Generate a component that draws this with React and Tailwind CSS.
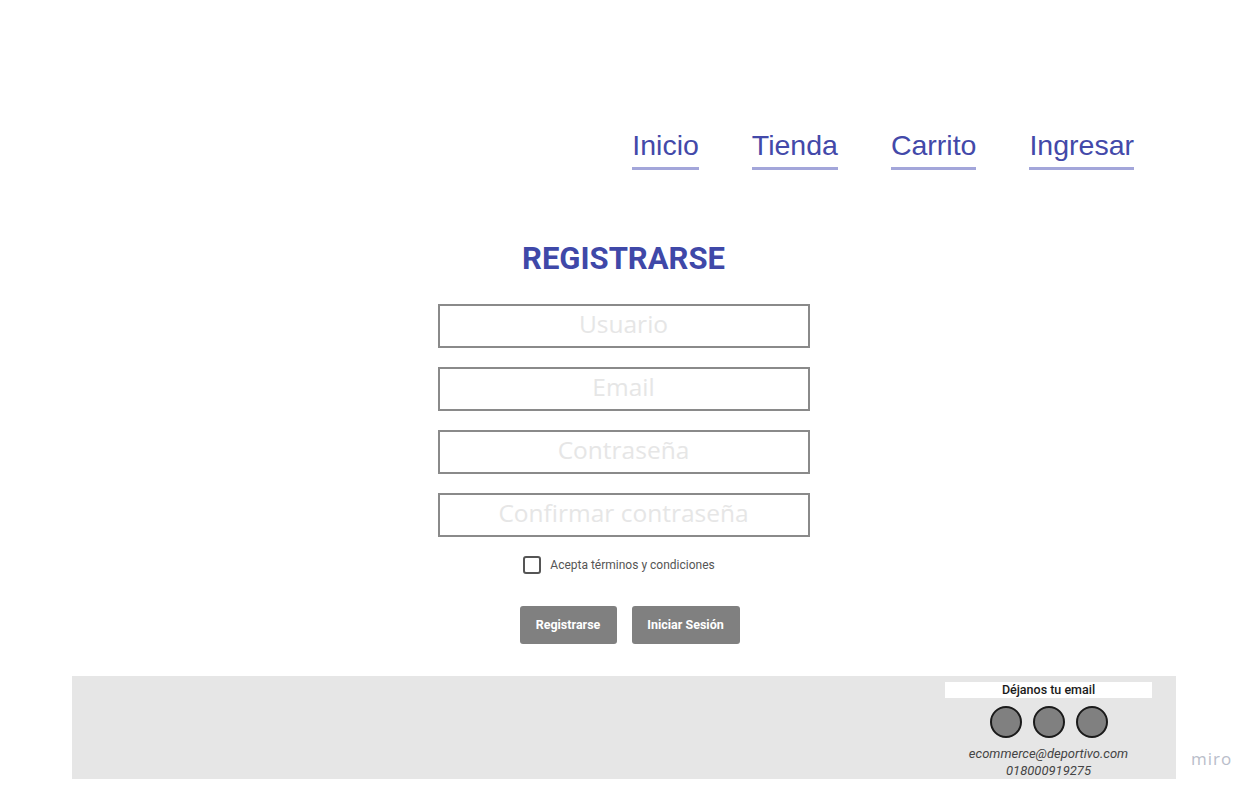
import React from 'react';

const navItems = ['Inicio', 'Tienda', 'Carrito', 'Ingresar'];
const fields = ['Usuario', 'Email', 'Contraseña', 'Confirmar contraseña'];

const NavLink = ({ label }) => (
  <a
    href="#"
    className="block pb-[6px] border-b-[3px] border-[#a3a6da] text-[28.5px] leading-[32px] text-[#4349a9] font-['Liberation_Sans',Arial,sans-serif]"
  >
    {label}
  </a>
);

const App = () => {
  return (
    <div className="relative w-full min-h-[793px] bg-white font-['Roboto',sans-serif]">
      {/* Header nav */}
      <nav className="flex justify-end gap-[53px] pt-[129px] pr-[126px]">
        {navItems.map((item) => (
          <NavLink key={item} label={item} />
        ))}
      </nav>

      {/* Register form */}
      <main className="flex flex-col items-center pt-[71px] pr-[13px]">
        <h1 className="text-[31px] leading-[36px] font-bold text-[#3f48a8] font-['Roboto',sans-serif]">
          REGISTRARSE
        </h1>

        <div className="flex flex-col gap-[19px] mt-[27px] w-[372px]">
          {fields.map((field) => (
            <input
              key={field}
              type={field.includes('ontraseña') ? 'password' : 'text'}
              placeholder={field}
              className="h-[44px] w-full border-2 border-[#8a8a8a] bg-white text-center text-[24.5px] pb-[5px] font-['Open_Sans',sans-serif] placeholder:text-[#e6e6e6] outline-none"
            />
          ))}
        </div>

        <label className="flex items-center gap-[9px] mt-[19px] pr-[9px] cursor-pointer">
          <span className="w-[18px] h-[18px] border-2 border-[#555] rounded-[3px] bg-white" />
          <span className="text-[12px] leading-[18px] text-[#555] font-['Roboto',sans-serif]">
            Acepta términos y condiciones
          </span>
        </label>

        <div className="flex gap-[15px] mt-[32px] pl-[12px]">
          <button className="w-[97px] h-[38px] rounded-[3px] bg-[#808080] text-white text-[12.5px] font-bold font-['Roboto',sans-serif]">
            Registrarse
          </button>
          <button className="w-[108px] h-[38px] rounded-[3px] bg-[#808080] text-white text-[12.5px] font-bold font-['Roboto',sans-serif]">
            Iniciar Sesión
          </button>
        </div>
      </main>

      {/* Footer */}
      <footer className="mt-[32px] ml-[72px] w-[1104px] h-[103px] bg-[#e6e6e6] flex justify-end pr-[24px] pt-[6px]">
        <div className="w-[207px] flex flex-col items-center">
          <div className="w-full h-[16px] bg-white text-center text-[12.5px] leading-[16px] font-medium text-[#1a1a1a]">
            Déjanos tu email
          </div>
          <div className="flex gap-[11px] mt-[8px]">
            <span className="w-[32px] h-[32px] rounded-full bg-[#808080] border-2 border-[#1a1a1a]" />
            <span className="w-[32px] h-[32px] rounded-full bg-[#808080] border-2 border-[#1a1a1a]" />
            <span className="w-[32px] h-[32px] rounded-full bg-[#808080] border-2 border-[#1a1a1a]" />
          </div>
          <div className="mt-[7px] text-center text-[13px] leading-[17px] italic text-[#444]">
            <div>ecommerce@deportivo.com</div>
            <div>018000919275</div>
          </div>
        </div>
      </footer>

      {/* miro watermark */}
      <span className="absolute left-[1191px] top-[746px] text-[17px] tracking-[1px] text-[#b9bdca] font-['Open_Sans',sans-serif]">
        miro
      </span>
    </div>
  );
};

export default App;
